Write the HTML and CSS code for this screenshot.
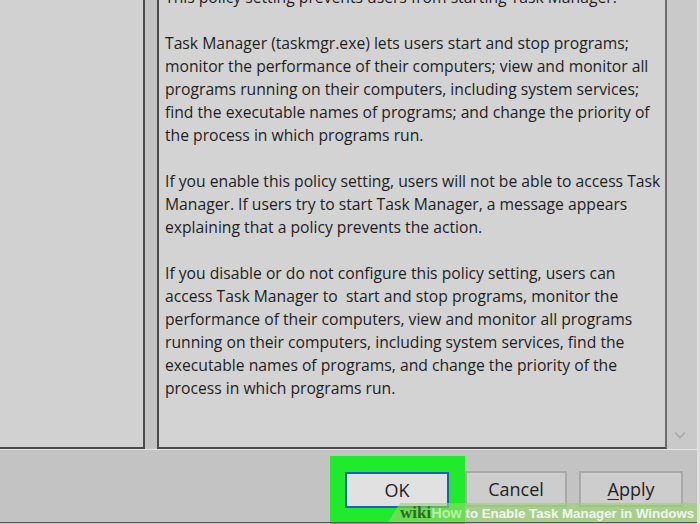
FILE: index.html
```html
<!DOCTYPE html>
<html>
<head>
<meta charset="utf-8">
<link rel="stylesheet" href="styles.css">
</head>
<body>
<div class="window">
  <div class="top">
    <div class="left-pane"></div>
    <div class="text-pane">
      <div class="text">
        <p>This policy setting prevents users from starting Task Manager.</p>
        <p>Task Manager (taskmgr.exe) lets users start and stop programs;<br>monitor the performance of their computers; view and monitor all<br>programs running on their computers, including system services;<br>find the executable names of programs; and change the priority of<br>the process in which programs run.</p>
        <p>If you enable this policy setting, users will not be able to access Task<br>Manager. If users try to start Task Manager, a message appears<br>explaining that a policy prevents the action.</p>
        <p>If you disable or do not configure this policy setting, users can<br>access Task Manager to&nbsp; start and stop programs, monitor the<br>performance of their computers, view and monitor all programs<br>running on their computers, including system services, find the<br>executable names of programs, and change the priority of the<br>process in which programs run.</p>
      </div>
    </div>
    <div class="scroll">
      <svg class="chev" width="12" height="8" viewBox="0 0 12 8"><path d="M1 1.5 L6 6.5 L11 1.5" fill="none" stroke="#a8a8a8" stroke-width="1.6"/></svg>
    </div>
  </div>
  <div class="footer">
    <div class="highlight"><button class="btn ok">OK</button></div>
    <button class="btn cancel">Cancel</button>
    <button class="btn apply"><u>A</u>pply</button>
  </div>
  <div class="watermark"><span class="wiki">wiki</span><span class="how">How</span><span class="title"> to Enable Task Manager in Windows</span></div>
</div>
</body>
</html>
```
FILE: styles.css
```css
html, body {
  margin: 0;
  padding: 0;
}
body {
  width: 700px;
  height: 524px;
  overflow: hidden;
  background: #c3c3c3;
  font-family: "Open Sans", "Noto Sans", sans-serif;
}
.window {
  position: relative;
  width: 700px;
  height: 524px;
  background: #c3c3c3;
  box-sizing: border-box;
  border-right: 3px solid #e0e0e0;
  overflow: hidden;
}
.top {
  display: flex;
  height: 449px;
}
.left-pane {
  width: 143px;
  height: 447px;
  background: #d1d1d1;
  border-right: 2px solid #4a4a4a;
  border-bottom: 2px solid #4a4a4a;
  flex: none;
}
.text-pane {
  margin-left: 12px;
  width: 506px;
  height: 447px;
  flex: none;
  background: #d3d3d3;
  border-left: 2px solid #4a4a4a;
  border-right: 2px solid #6a6a6a;
  border-bottom: 2px solid #4a4a4a;
  overflow: hidden;
}
.text {
  margin-top: -14px;
  padding-left: 6px;
  font-size: 15.7px;
  line-height: 23px;
  color: #1e1e1e;
}
.text p {
  margin: 0 0 23px 0;
  white-space: nowrap;
}
.scroll {
  flex: 1;
  height: 449px;
  background: #c9c9c9;
  display: flex;
  flex-direction: column;
  justify-content: flex-end;
  align-items: center;
}
.chev {
  margin-bottom: 10px;
  margin-right: 4px;
}
.footer {
  display: flex;
  align-items: flex-start;
  padding-left: 330px;
  height: 75px;
  box-sizing: border-box;
  border-top: 1px solid #e4e4e4;
}
.highlight {
  margin-top: 6px;
  height: 68px;
  padding: 16px 16px 0 15px;
  box-sizing: border-box;
  background: #1fea2c;
}
.btn {
  font-family: "Open Sans", "Noto Sans", sans-serif;
  font-size: 18px;
  color: #222;
  height: 36px;
  box-sizing: border-box;
  padding: 0;
  margin: 0;
  background: #cdcdcd;
  border: 2px solid #a9a9a9;
  display: flex;
  align-items: center;
  justify-content: center;
}
.btn.ok {
  width: 104px;
  background: #e1e1e1;
  border: 2px solid #1761b8;
}
.btn.cancel {
  width: 102px;
  margin-top: 21px;
}
.btn.apply {
  width: 104px;
  margin-top: 21px;
  margin-left: 12px;
}
.btn u {
  text-decoration-thickness: 1px;
  text-underline-offset: 3px;
}
.watermark {
  position: absolute;
  left: 388px;
  top: 503px;
  width: 312px;
  height: 19px;
  background: rgba(150, 215, 105, 0.62);
  clip-path: polygon(12px 0, 100% 0, 100% 100%, 0 100%);
  font-family: "Liberation Sans", Arial, sans-serif;
  font-weight: bold;
  font-size: 13px;
  line-height: 20px;
  white-space: nowrap;
  padding-left: 12px;
  box-sizing: border-box;
}
.wiki {
  font-family: "Liberation Serif", "Times New Roman", serif;
  color: #2f6a25;
  font-size: 17px;
}
.how {
  color: #b9f0a6;
  font-size: 14.5px;
}
.title {
  color: #f2f7ee;
  font-size: 13.3px;
}
.window::after {
  content: "";
  position: absolute;
  left: 0;
  right: 0;
  bottom: 1px;
  height: 1px;
  background: #5a5a5a;
}
```
